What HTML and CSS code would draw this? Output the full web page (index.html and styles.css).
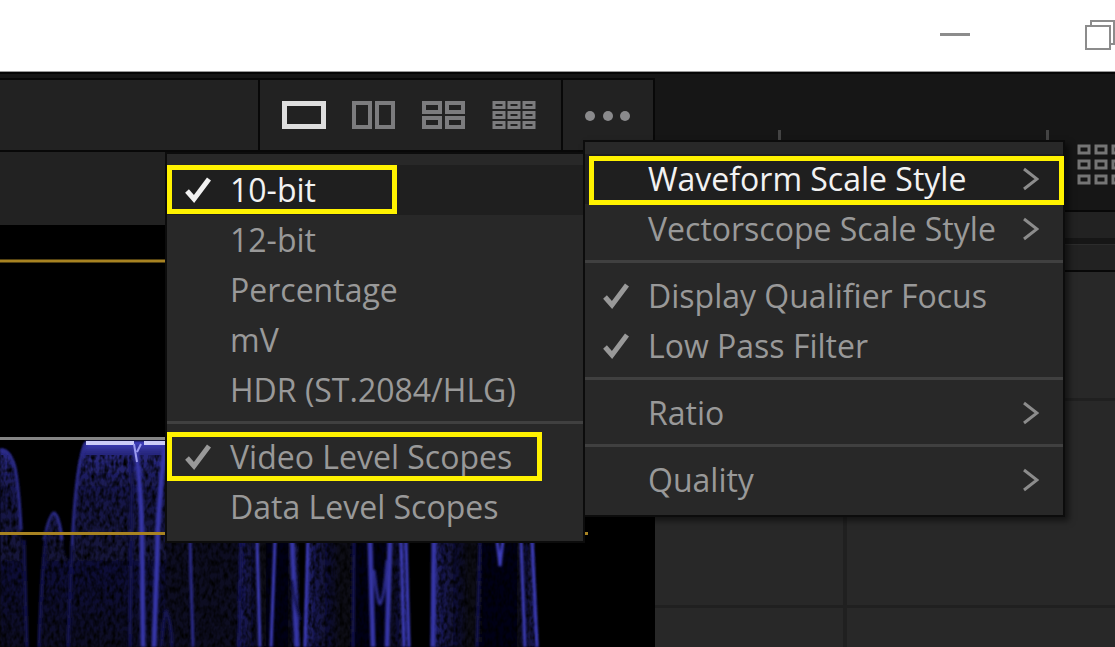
FILE: index.html
```
<!DOCTYPE html>
<html lang="en">
<head>
    <meta charset="utf-8">
    <title>Scopes</title>
    <meta name="viewport" content="width=device-width, initial-scale=1.0">
    <link rel="stylesheet" href="styles.css">
</head>
<body>
    <!-- shared icons -->
    <svg class="defs" width="0" height="0" aria-hidden="true">
        <symbol id="check" viewBox="0 0 26 26"><path d="M2 14 L9 22 L24 2" fill="none" stroke="currentColor" stroke-width="5"/></symbol>
        <symbol id="chevron" viewBox="0 0 16 24"><path d="M1 2 L14 12 L1 22" fill="none" stroke="currentColor" stroke-width="3"/></symbol>
    </svg>

    <header class="titlebar">
        <button class="window-button" aria-label="Minimize">
            <svg width="30" height="30" viewBox="0 0 30 30"><path d="M0 14.5H30" stroke="#8c8c8c" stroke-width="3"/></svg>
        </button>
        <button class="window-button" aria-label="Restore">
            <svg width="30" height="32" viewBox="0 0 30 32" fill="none" stroke="#8c8c8c" stroke-width="2"><path d="M6 6V2H29V25H25"/><path d="M1 7H25V30H1Z"/></svg>
        </button>
    </header>

    <main class="app">
        <section class="scopes">
            <div class="toolbar">
                <div class="toolbar-title"></div>
                <div class="layouts">
                    <button class="icon-button selected" aria-label="Single view">
                        <svg width="44" height="28" viewBox="0 0 44 28"><path d="M2.500 2.500H41.500V25.500H2.500Z"/></svg>
                    </button>
                    <button class="icon-button" aria-label="Two views">
                        <svg width="44" height="28" viewBox="0 0 44 28"><path d="M2 2H18V26H2ZM25 2H41V26H25Z"/></svg>
                    </button>
                    <button class="icon-button" aria-label="Four views">
                        <svg width="44" height="28" viewBox="0 0 44 28"><path d="M2 2H18V11H2ZM25 2H41V11H25ZM2 17H18V26H2ZM25 17H41V26H25Z"/></svg>
                    </button>
                    <button class="icon-button fine" aria-label="Nine views">
                        <svg width="44" height="28" viewBox="0 0 44 28"><path d="M2 1.500H12V6.500H2ZM17 1.500H27V6.500H17ZM32 1.500H42V6.500H32ZM2 11.500H12V16.500H2ZM17 11.500H27V16.500H17ZM32 11.500H42V16.500H32ZM2 21.500H12V26.500H2ZM17 21.500H27V26.500H17ZM32 21.500H42V26.500H32Z"/></svg>
                    </button>
                </div>
                <div class="more">
                    <button class="more-button" aria-label="Options" aria-expanded="true">
                        <svg width="46" height="12" viewBox="0 0 46 12"><circle cx="5" cy="7" r="5"/><circle cx="23" cy="7" r="5"/><circle cx="40" cy="7" r="5"/></svg>
                    </button>

                    <div class="menu" role="menu">
                        <div class="has-submenu">
                            <button class="item active" role="menuitem">
                                <span class="label">Waveform Scale Style</span>
                                <svg class="chevron"><use href="#chevron"/></svg>
                                <span class="outline outline-parent"></span>
                            </button>
                            <div class="menu submenu" role="menu">
                                <button class="item active" role="menuitemradio" aria-checked="true">
                                    <svg class="check"><use href="#check"/></svg>
                                    <span class="label">10-bit</span>
                                    <span class="outline outline-short"></span>
                                </button>
                                <button class="item" role="menuitemradio"><span class="label">12-bit</span></button>
                                <button class="item" role="menuitemradio"><span class="label">Percentage</span></button>
                                <button class="item" role="menuitemradio"><span class="label">mV</span></button>
                                <button class="item" role="menuitemradio"><span class="label">HDR (ST.2084/HLG)</span></button>
                                <hr>
                                <button class="item" role="menuitemradio" aria-checked="true">
                                    <svg class="check"><use href="#check"/></svg>
                                    <span class="label">Video Level Scopes</span>
                                    <span class="outline outline-long"></span>
                                </button>
                                <button class="item" role="menuitemradio"><span class="label">Data Level Scopes</span></button>
                            </div>
                        </div>
                        <button class="item" role="menuitem">
                            <span class="label">Vectorscope Scale Style</span>
                            <svg class="chevron"><use href="#chevron"/></svg>
                        </button>
                        <hr>
                        <button class="item" role="menuitemcheckbox" aria-checked="true">
                            <svg class="check"><use href="#check"/></svg>
                            <span class="label">Display Qualifier Focus</span>
                        </button>
                        <button class="item" role="menuitemcheckbox" aria-checked="true">
                            <svg class="check"><use href="#check"/></svg>
                            <span class="label">Low Pass Filter</span>
                        </button>
                        <hr>
                        <button class="item" role="menuitem">
                            <span class="label">Ratio</span>
                            <svg class="chevron"><use href="#chevron"/></svg>
                        </button>
                        <hr>
                        <button class="item" role="menuitem">
                            <span class="label">Quality</span>
                            <svg class="chevron"><use href="#chevron"/></svg>
                        </button>
                    </div>
                </div>
            </div>
            <div class="subbar"></div>
            <div class="scope">
                <svg class="waveform" viewBox="0 225 655 422" preserveAspectRatio="xMinYMin slice">
                    <defs>
                        <linearGradient id="fade" x1="0" y1="440" x2="0" y2="647" gradientUnits="userSpaceOnUse">
                            <stop offset="0" stop-color="#4444d0"/>
                            <stop offset=".06" stop-color="#292980"/>
                            <stop offset=".25" stop-color="#17174a"/>
                            <stop offset="1" stop-color="#0b0b25"/>
                        </linearGradient>
                        <linearGradient id="side">
                            <stop offset="0" stop-color="#20206a"/>
                            <stop offset=".35" stop-color="#070718"/>
                            <stop offset=".8" stop-color="#060614"/>
                            <stop offset="1" stop-color="#1c1c60"/>
                        </linearGradient>
                        <filter id="soft"><feGaussianBlur stdDeviation="1.300"/></filter>
                        <filter id="grain" x="0" y="0" width="100%" height="100%">
                            <feTurbulence type="fractalNoise" baseFrequency=".25 .15" numOctaves="2" seed="4"/>
                            <feColorMatrix values="0 0 0 0 0  0 0 0 0 0  0 0 0 0 0  2 0 0 0 -.7"/>
                        </filter>
                    </defs>
                    <!-- signal body -->
                    <g filter="url(#soft)">
                        <path fill="url(#fade)" d="M0 449Q12 448 16 472Q24 540 27 647H0Z"/>
                        <path fill="url(#fade)" d="M38 647Q44 520 54 512Q61 518 64 550L68 560L72 558Q76 450 86 441H166V647Z"/>
                        <path fill="#0a0a20" d="M166 540H246V647H166Z"/>
                        <path fill="url(#side)" d="M240 540H298L300 647H238Z"/>
                        <path fill="url(#side)" d="M307 540H406L409 647H304Z"/>
                        <path fill="url(#side)" d="M433 540H534L538 647H431Z"/>
                    </g>
                    <path filter="url(#grain)" d="M0 455H545V647H0Z"/>
                    <!-- bright edges -->
                    <g class="traces" filter="url(#soft)">
                        <path class="wide" d="M135 445Q141 480 142 540L143 647M165 445Q158 500 157 560L154 647"/>
                        <path class="dim" d="M0 450Q10 449 15 468Q19 490 21 530M72 550Q76 460 86 443M44 540Q50 513 54 513Q59 515 62 540"/>
                        <path class="faint" d="M39 647Q42 560 47 530M72 545L68 647M24 540L27 647M132 460L130 647M166 610Q172 625 172 647M161 647L165 612"/>
                        <path class="dim" d="M190 540L193 647"/>
                        <path d="M257 540L260 647M275 540L271 647M308 540L305 647"/>
                        <path class="wide" d="M292 540L297 647"/>
                        <path class="faint" d="M241 540L239 647M354 540L353 647M480 540L477 647M300 620Q294 600 292 580"/>
                        <path class="wide" d="M370 540L373 647M390 540L387 647M434 540L433 647"/>
                        <path class="dim" d="M374 570Q378 605 380 604Q384 600 387 560"/>
                        <path d="M401 540L404 647M406 540L409 647M497 540L500 566L503 540M521 540L525 647M532 540L537 647"/>
                    </g>
                    <path stroke="#ccccf8" stroke-width="4" d="M86 443H134M144 443H166"/>
                    <path stroke="#9c9cf0" stroke-width="2" fill="none" d="M134 444L137 462M141 444L137 452"/>
                    <!-- scale lines -->
                    <path stroke="#858585" stroke-width="3" d="M0 438.500H583"/>
                    <path stroke="#a88322" stroke-width="3" d="M0 261H588M0 533.500H588"/>
                </svg>
            </div>
        </section>

        <section class="nodes">
            <div class="ruler">
                <span class="tick"></span>
                <span class="tick"></span>
                <button class="grid-button" aria-label="Grid view">
                    <svg width="48" height="42" viewBox="0 0 48 42"><path d="M1 2H11V9H1ZM18 2H28V9H18ZM35 2H45V9H35ZM1 17H11V24H1ZM18 17H28V24H18ZM35 17H45V24H35ZM1 32H11V39H1ZM18 32H28V39H18ZM35 32H45V39H35Z"/></svg>
                </button>
            </div>
            <div class="strip"></div>
            <div class="strip"></div>
            <div class="cells">
                <div></div><div></div>
                <div></div><div></div>
                <div></div><div></div>
            </div>
        </section>
    </main>
</body>
</html>
```
FILE: styles.css
```
*, *::before, *::after {
    box-sizing: border-box;
}

body {
    margin: 0;
    height: 100vh;
    display: flex;
    flex-direction: column;
    overflow: hidden;
    background: #161616;
    color: #999;
    font-family: "Open Sans", "Noto Sans", sans-serif;
    font-size: 32px;
}

button {
    display: flex;
    align-items: center;
    margin: 0;
    padding: 0;
    border: 0;
    background: none;
    color: inherit;
    font: inherit;
    cursor: pointer;
}

svg {
    display: block;
    flex: none;
    overflow: visible;
}

.defs {
    position: absolute;
}

.titlebar {
    flex: none;
    display: flex;
    justify-content: flex-end;
    align-items: center;
    gap: 115px;
    height: 72px;
    padding-bottom: 2px;
    background: #fff;
    border-bottom: 1px solid #999;
}

.app {
    flex: 1;
    min-height: 0;
    display: grid;
    grid-template-columns: 655fr 460fr;
    border-top: 2px solid #060606;
}

/* Scopes panel */
.scopes {
    display: flex;
    flex-direction: column;
    min-width: 0;
    padding-top: 4px;
}

.toolbar {
    display: flex;
    height: 74px;
    border: solid #080808;
    border-width: 2px 2px 2px 0;
    background: #222;
}

.toolbar-title {
    flex: 1;
}

.layouts {
    display: flex;
    gap: 26px;
    padding: 0 25px 0 22px;
    border: solid #080808;
    border-width: 0 2px;
}

.icon-button svg {
    fill: none;
    stroke: #7c7c7e;
    stroke-width: 4;
}

.icon-button.selected svg {
    stroke: #dedede;
    stroke-width: 5;
}

.icon-button.fine svg {
    stroke-width: 3;
}

.more {
    position: relative;
    display: flex;
    width: 90px;
}

.more-button {
    flex: 1;
    justify-content: center;
    fill: #8a8a8c;
}

.subbar {
    height: 73px;
    background: #222;
}

.scope {
    flex: 1;
    min-height: 0;
    background: #000;
    overflow: hidden;
}

.waveform {
    width: 100%;
    height: 100%;
    overflow: hidden;
}

.traces {
    fill: none;
    stroke: #3d3dba;
    stroke-width: 3;
}

.traces .wide {
    stroke-width: 5;
    stroke: #3636a4;
}

.traces .dim {
    stroke: #2c2c8a;
}

.traces .faint {
    stroke: #191952;
}

/* Menus */
.menu {
    position: absolute;
    z-index: 10;
    top: 62px;
    left: 22px;
    width: 478px;
    padding: 12px 0 10px;
    background: #282828;
    box-shadow: 0 0 0 2px #0c0c0c, 4px 4px 6px 2px rgba(0, 0, 0, 0.5);
}

.has-submenu {
    position: relative;
}

.submenu {
    top: 0;
    left: auto;
    right: calc(100% + 2px);
    width: 416px;
    padding: 11px 0 9px;
    box-shadow: 0 0 0 2px #0c0c0c;
}

.item {
    position: relative;
    width: 100%;
    height: 50px;
    padding: 0 24px 1px 63px;
    text-align: left;
    white-space: nowrap;
}

.item.active {
    background: #1f1f1f;
    color: #f2f2f2;
}

.item .check {
    width: 26px;
    height: 26px;
    margin-left: -45px;
    margin-right: 19px;
}

.item .chevron {
    width: 16px;
    height: 24px;
    margin-left: auto;
    color: #8c8c8c;
}

.menu hr {
    height: 3px;
    margin: 6px 0 8px;
    border: 0;
    background: #404040;
}

/* Highlight frames */
.outline {
    position: absolute;
    top: 0;
    left: 0;
    height: 49px;
    border: 5px solid #fff200;
}

.outline-short {
    width: 230px;
}

.outline-long {
    width: 375px;
}

.outline-parent {
    top: 2px;
    left: 4px;
    right: -1px;
}

/* Node panel */
.nodes {
    display: flex;
    flex-direction: column;
    min-width: 0;
    background: #161616;
}

.ruler {
    display: flex;
    align-items: flex-end;
    height: 138px;
    padding-left: 123px;
    overflow: hidden;
    border-bottom: 2px solid #080808;
}

.tick {
    flex: none;
    width: 3px;
    height: 10px;
    margin: 0 265px 70px 0;
    background: #444;
}

.tick + .tick {
    margin-right: 29px;
}

.grid-button {
    flex: none;
    margin-bottom: 24px;
    fill: none;
    stroke: #757575;
    stroke-width: 3;
}

.strip {
    height: 26px;
    background: #222;
}

.strip + .strip {
    margin-top: 6px;
    border-top: 1px solid #2c2c2c;
}

.cells {
    flex: 1;
    display: grid;
    grid-template-columns: 190fr 270fr;
    grid-template-rows: 128fr 206fr 40fr;
    gap: 3px 4px;
    border-top: 2px solid #080808;
    background: #202020;
}

.cells div {
    background: #282828;
}
```
